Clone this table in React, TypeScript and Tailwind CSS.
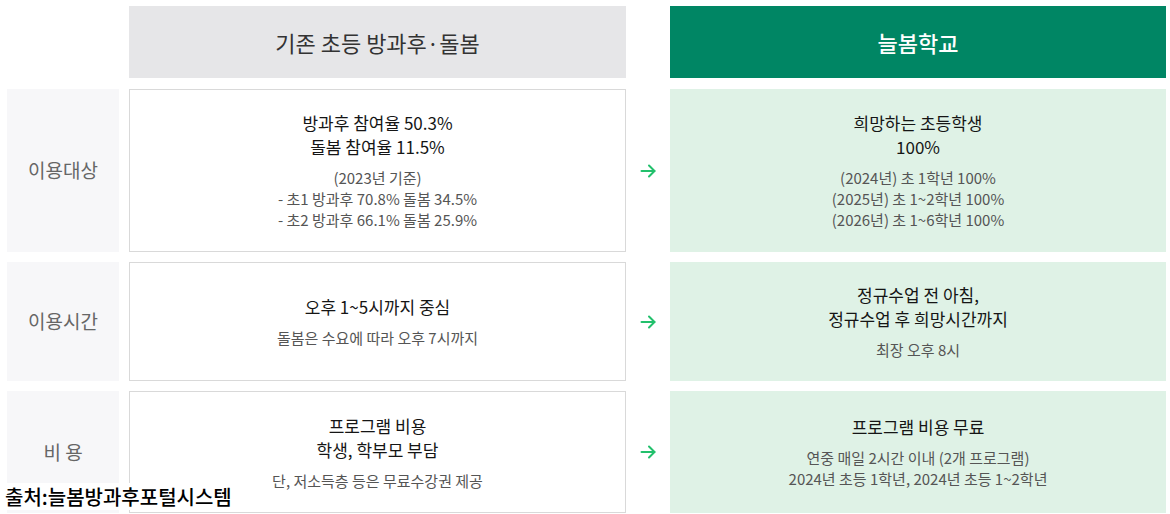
import React from "react";

type Row = {
  label: string;
  height: string;
  before: { main: string[]; sub: string[] };
  after: { main: string[]; sub: string[] };
};

const rows: Row[] = [
  {
    label: "이용대상",
    height: "h-[163px]",
    before: {
      main: ["방과후 참여율 50.3%", "돌봄 참여율 11.5%"],
      sub: ["(2023년 기준)", "- 초1 방과후 70.8% 돌봄 34.5%", "- 초2 방과후 66.1% 돌봄 25.9%"],
    },
    after: {
      main: ["희망하는 초등학생", "100%"],
      sub: ["(2024년) 초 1학년 100%", "(2025년) 초 1~2학년 100%", "(2026년) 초 1~6학년 100%"],
    },
  },
  {
    label: "이용시간",
    height: "h-[119px]",
    before: {
      main: ["오후 1~5시까지 중심"],
      sub: ["돌봄은 수요에 따라 오후 7시까지"],
    },
    after: {
      main: ["정규수업 전 아침,", "정규수업 후 희망시간까지"],
      sub: ["최장 오후 8시"],
    },
  },
  {
    label: "비 용",
    height: "h-[122px]",
    before: {
      main: ["프로그램 비용", "학생, 학부모 부담"],
      sub: ["단, 저소득층 등은 무료수강권 제공"],
    },
    after: {
      main: ["프로그램 비용 무료"],
      sub: ["연중 매일 2시간 이내 (2개 프로그램)", "2024년 초등 1학년, 2024년 초등 1~2학년"],
    },
  },
];

function Cell({ main, sub }: { main: string[]; sub: string[] }) {
  return (
    <div className="flex flex-col items-center text-center">
      <div className="text-[17px] leading-[24px] text-[#151515]">
        {main.map((m) => (
          <p key={m}>{m}</p>
        ))}
      </div>
      <div className="mt-[8px] text-[15px] leading-[21px] text-[#555]">
        {sub.map((s) => (
          <p key={s}>{s}</p>
        ))}
      </div>
    </div>
  );
}

function Arrow() {
  return (
    <svg width="17" height="14" viewBox="0 0 17 14" fill="none" stroke="#22c06c" strokeWidth="2" strokeLinecap="round" strokeLinejoin="round" aria-hidden>
      <path d="M1.5 7h13" />
      <path d="M9 1.5 14.5 7 9 12.5" />
    </svg>
  );
}

export default function App() {
  return (
    <div
      className="relative w-[1170px] h-[514px] overflow-hidden bg-white pl-[7px] pt-[6px]"
      style={{ fontFamily: '"Noto Sans CJK KR", "Noto Sans", sans-serif' }}
    >
      {/* headers */}
      <div className="flex h-[72px]">
        <div className="w-[112px] shrink-0" />
        <div className="ml-[10px] w-[497px] shrink-0 flex items-center justify-center bg-[#e6e6e8] text-[22px] text-[#333]">
          기존 초등 방과후·돌봄
        </div>
        <div className="w-[44px] shrink-0" />
        <div className="w-[496px] shrink-0 flex items-center justify-center bg-[#008664] text-[22px] font-medium text-white">
          늘봄학교
        </div>
      </div>

      <div className="mt-[11px] flex flex-col gap-[10px]">
        {rows.map((r) => (
          <div key={r.label} className={`flex ${r.height}`}>
            <div className="w-[112px] shrink-0 flex items-center justify-center bg-[#f7f7f9] text-[19px] text-[#666]">
              {r.label}
            </div>
            <div className="ml-[10px] w-[497px] shrink-0 flex items-center justify-center border border-[#d9d9d9] bg-white">
              <Cell {...r.before} />
            </div>
            <div className="w-[44px] shrink-0 flex items-center justify-center">
              <Arrow />
            </div>
            <div className="w-[496px] shrink-0 flex items-center justify-center bg-[#dff2e6]">
              <Cell {...r.after} />
            </div>
          </div>
        ))}
      </div>

      {/* source caption */}
      <div className="absolute left-0 top-[483px] h-[27px] bg-white pl-[5px] pr-[6px] text-[20px] leading-[27px] font-medium text-black">
        출처:늘봄방과후포털시스템
      </div>
    </div>
  );
}
